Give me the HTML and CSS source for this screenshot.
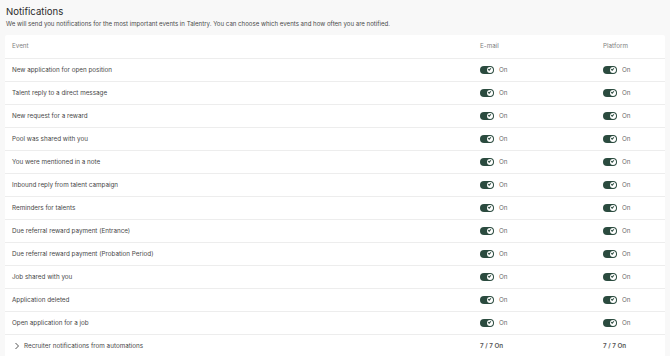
FILE: index.html
```html
<html><head>
<meta charset="UTF-8">
<title>Notifications</title>
<link rel="stylesheet" href="styles.css">
</head>
<body>
    <div class="page">
        <h1>Notifications</h1>
        <p class="lead">We will send you notifications for the most important events in Talentry. You can choose which events and how often you are notified.</p>

        <div class="card">
            <div class="row head">
                <div>Event</div>
                <div>E-mail</div>
                <div>Platform</div>
            </div>
            <div class="row"><div>New application for open position</div><div class="opt"><span class="toggle"></span>On</div><div class="opt"><span class="toggle"></span>On</div></div>
            <div class="row"><div>Talent reply to a direct message</div><div class="opt"><span class="toggle"></span>On</div><div class="opt"><span class="toggle"></span>On</div></div>
            <div class="row"><div>New request for a reward</div><div class="opt"><span class="toggle"></span>On</div><div class="opt"><span class="toggle"></span>On</div></div>
            <div class="row"><div>Pool was shared with you</div><div class="opt"><span class="toggle"></span>On</div><div class="opt"><span class="toggle"></span>On</div></div>
            <div class="row"><div>You were mentioned in a note</div><div class="opt"><span class="toggle"></span>On</div><div class="opt"><span class="toggle"></span>On</div></div>
            <div class="row"><div>Inbound reply from talent campaign</div><div class="opt"><span class="toggle"></span>On</div><div class="opt"><span class="toggle"></span>On</div></div>
            <div class="row"><div>Reminders for talents</div><div class="opt"><span class="toggle"></span>On</div><div class="opt"><span class="toggle"></span>On</div></div>
            <div class="row"><div>Due referral reward payment (Entrance)</div><div class="opt"><span class="toggle"></span>On</div><div class="opt"><span class="toggle"></span>On</div></div>
            <div class="row"><div>Due referral reward payment (Probation Period)</div><div class="opt"><span class="toggle"></span>On</div><div class="opt"><span class="toggle"></span>On</div></div>
            <div class="row"><div>Job shared with you</div><div class="opt"><span class="toggle"></span>On</div><div class="opt"><span class="toggle"></span>On</div></div>
            <div class="row"><div>Application deleted</div><div class="opt"><span class="toggle"></span>On</div><div class="opt"><span class="toggle"></span>On</div></div>
            <div class="row"><div>Open application for a job</div><div class="opt"><span class="toggle"></span>On</div><div class="opt"><span class="toggle"></span>On</div></div>
            <div class="row group">
                <div class="group-name">
                    <svg class="chevron" viewBox="0 0 6 8"><path d="M1.5 1 L4.5 4 L1.5 7" fill="none" stroke="#555" stroke-width="1"/></svg>
                    Recruiter notifications from automations
                </div>
                <div class="count">7 / 7 On</div>
                <div class="count">7 / 7 On</div>
            </div>
        </div>
    </div>
</body></html>
```

FILE: styles.css
```css
* {
    margin: 0;
    padding: 0;
    box-sizing: border-box;
    font-family: 'Inter', 'Liberation Sans', sans-serif;
}

body {
    background: #f8f8f8;
    color: #3a3a3a;
}

.page {
    padding: 5px 5px 0 5px;
}

h1 {
    font-size: 9.6px;
    font-weight: 400;
    color: #2b2b2b;
    margin-left: 1px;
    line-height: 14px;
}

.lead {
    font-size: 6.1px;
    color: #4a4a4a;
    margin: 0 0 0 1px;
    line-height: 10px;
}

.card {
    background: #fff;
    margin-top: 6px;
    border-radius: 2px;
    width: 660px;
}

.row {
    display: grid;
    grid-template-columns: 1fr 123px 62px;
    align-items: center;
    height: 23px;
    padding-left: 7px;
    font-size: 6.3px;
    color: #474747;
    border-bottom: 1px solid #ededed;
}

.head {
    height: 23.5px;
    color: #808080;
}

.opt {
    display: flex;
    align-items: center;
    gap: 5px;
    color: #6a6a6a;
}

.toggle {
    position: relative;
    width: 14px;
    height: 8px;
    border-radius: 4px;
    background: #2b4b3f;
}

.toggle::after {
    content: '';
    position: absolute;
    right: 1px;
    top: 1px;
    width: 6px;
    height: 6px;
    border-radius: 50%;
    background: #fff;
}

.toggle::before {
    content: '';
    position: absolute;
    right: 3px;
    top: 2.5px;
    width: 2px;
    height: 1px;
    border-left: 0.8px solid #2b4b3f;
    border-bottom: 0.8px solid #2b4b3f;
    transform: rotate(-45deg);
    z-index: 1;
}

.group-name {
    display: flex;
    align-items: center;
    gap: 4px;
    padding-left: 2px;
}

.chevron {
    width: 6px;
    height: 8px;
}

.count {
    font-weight: 600;
    color: #555;
}
```
